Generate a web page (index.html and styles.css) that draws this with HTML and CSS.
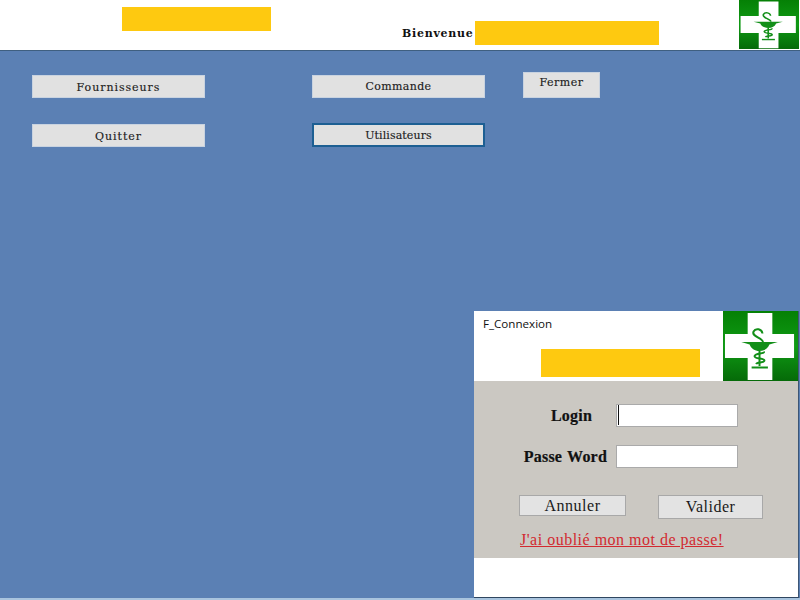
FILE: index.html
```html
<!DOCTYPE html>
<html lang="fr">
<head>
<meta charset="utf-8">
<title>Pharmacie</title>
<link rel="stylesheet" href="styles.css">
</head>
<body>
<svg class="defs" width="0" height="0" aria-hidden="true">
  <defs>
    <linearGradient id="g" x1="0" y1="0" x2="0" y2="1">
      <stop offset="0" stop-color="#058005"/>
      <stop offset="0.5" stop-color="#0f9a14"/>
      <stop offset="1" stop-color="#056a08"/>
    </linearGradient>
    <symbol id="logo" viewBox="0 0 76 70" preserveAspectRatio="none">
      <rect width="76" height="70" fill="url(#g)"/>
      <path d="M25 2H50V23H72V47H50V69H25V47H2V23H25Z" fill="#fff"/>
      <path d="M18.500 31H55.500L47 33.500C45.500 37.500 42 40 37 40C32 40 28.500 37.500 27 33.500Z" fill="#128f18"/>
      <path d="M37 40V55" fill="none" stroke="#128f18" stroke-width="2"/>
      <path d="M29 56.500H45.500" fill="none" stroke="#128f18" stroke-width="2"/>
      <path d="M40 22.500C39.500 18 33 16.500 31 20.500C28.500 25.500 40 27 40.500 31M41.500 40.500C42.500 43 33 42 32 45C31.500 48 42 47 42 49.500C42 52 34.500 51 33.500 53" fill="none" stroke="#128f18" stroke-width="2"/>
    </symbol>
  </defs>
</svg>

<header class="topbar">
  <div class="mask mask-title"></div>
  <div class="welcome">
    <span class="welcome-label">Bienvenue</span>
    <div class="mask mask-user"></div>
  </div>
  <svg class="logo logo-top"><use href="#logo"/></svg>
</header>

<main class="menu">
  <button class="menu-btn" type="button">Fournisseurs</button>
  <button class="menu-btn menu-order" type="button">Commande</button>
  <button class="menu-btn menu-close" type="button">Fermer</button>
  <button class="menu-btn" type="button">Quitter</button>
  <button class="menu-btn is-focus" type="button">Utilisateurs</button>
</main>

<section class="dialog">
  <div class="dialog-head">
    <div class="dialog-brand">
      <div class="dialog-title">F_Connexion</div>
      <div class="mask mask-dialog"></div>
    </div>
    <svg class="logo logo-dialog"><use href="#logo"/></svg>
  </div>
  <form class="dialog-body">
    <div class="field field-login">
      <label class="field-label" for="login">Login</label>
      <span class="input-wrap">
        <input class="field-input" id="login" type="text">
        <span class="caret"></span>
      </span>
    </div>
    <div class="field field-pass">
      <label class="field-label" for="pass">Passe Word</label>
      <input class="field-input" id="pass" type="password">
    </div>
    <div class="actions">
      <button class="dlg-btn dlg-cancel" type="button">Annuler</button>
      <button class="dlg-btn dlg-ok" type="button">Valider</button>
    </div>
    <a class="forgot" href="#">J'ai oublié mon mot de passe!</a>
  </form>
  <div class="dialog-foot"></div>
</section>
<div class="edge"></div>
</body>
</html>
```
FILE: styles.css
```css
* { box-sizing: border-box; }
html, body { height: 100%; }
body {
  margin: 0;
  width: 800px;
  height: 600px;
  overflow: hidden;
  position: relative;
  background: #5b80b4;
  font-family: "Liberation Serif", serif;
}
.defs { position: absolute; }

.mask { background: #fec910; }

.topbar {
  height: 51px;
  background: #fff;
  border-bottom: 1px solid #3f5f80;
  display: flex;
  align-items: flex-start;
  padding-left: 122px;
}
.mask-title { width: 149px; height: 24px; margin-top: 7px; }
.welcome {
  display: flex;
  align-items: center;
  gap: 2px;
  margin: 21px 0 0 131px;
}
.welcome-label {
  font-family: "DejaVu Serif", serif;
  font-weight: 700;
  font-size: 11px;
  letter-spacing: 0.75px;
  color: #111;
  width: 71px;
  white-space: nowrap;
}
.mask-user { width: 184px; height: 24px; }
.logo { display: block; flex: none; }
.logo-top { width: 60px; height: 49px; margin-left: 80px; }

.menu {
  display: grid;
  grid-template-columns: 280px 211px 77px;
  grid-template-rows: 26px 24px;
  row-gap: 25px;
  padding: 21px 0 0 32px;
  justify-items: start;
}
.menu > .menu-btn { align-self: end; }
.menu-btn {
  width: 173px;
  height: 23px;
  margin: 0;
  padding: 1px 0 0;
  background: #e1e1e1;
  border: 1px solid #c9d3e0;
  font-family: "DejaVu Serif", serif;
  font-size: 11px;
  letter-spacing: 0.95px;
  color: #1c1c1c;
  -webkit-text-stroke: 0.15px #1c1c1c;
}
.menu > .menu-order { letter-spacing: 0.35px; padding: 0; }
.menu > .menu-close {
  height: 26px;
  width: 77px;
  padding: 0 0 5px;
  letter-spacing: 0.5px;
}
.menu > .is-focus {
  height: 24px;
  border: 2px solid #1d5f93;
  padding: 0;
  letter-spacing: 0.1px;
}

.dialog {
  position: absolute;
  left: 474px;
  top: 311px;
  width: 325px;
  height: 287px;
  background: #fff;
  border-right: 1px solid #3d5675;
  border-bottom: 1px solid #2f4660;
  display: flex;
  flex-direction: column;
}
.edge {
  position: absolute;
  left: 0;
  right: 0;
  bottom: 0;
  height: 2px;
  background: #a9c4de;
}
.dialog-head {
  height: 70px;
  display: flex;
  justify-content: space-between;
}
.dialog-brand { padding: 6px 0 0 9px; }
.dialog-title {
  font-family: "Open Sans", sans-serif;
  font-size: 11.6px;
  line-height: 14px;
  color: #111;
}
.mask-dialog { width: 159px; height: 28px; margin: 18px 0 0 58px; }
.logo-dialog { width: 75px; height: 70px; }

.dialog-body {
  height: 177px;
  background: #cbc8c2;
  padding-top: 23px;
  display: flex;
  flex-direction: column;
}
.field { display: flex; align-items: center; height: 23px; }
.field-pass { margin-top: 18px; }
.field-label {
  width: 142px;
  font-weight: 700;
  font-size: 16px;
  letter-spacing: 0.2px;
  word-spacing: 1px;
  color: #111;
  text-align: right;
  -webkit-text-stroke: 0.2px #111;
}
.field-login .field-label { padding-right: 24px; }
.field-pass .field-label { padding-right: 9px; }
.input-wrap { position: relative; display: block; }
.field-input {
  display: block;
  width: 122px;
  height: 23px;
  padding: 0;
  background: #fff;
  border: 1px solid #aaa;
  border-radius: 0;
  outline: 0;
}
.caret {
  position: absolute;
  left: 2px;
  top: 1px;
  width: 1px;
  height: 20px;
  background: #111;
}
.actions {
  display: flex;
  align-items: flex-start;
  gap: 32px;
  margin: 27px 0 0 45px;
}
.dlg-btn {
  margin: 0;
  padding: 0;
  background: #e3e3e3;
  border: 1px solid #a8a8a8;
  font-family: "Liberation Serif", serif;
  font-size: 16px;
  letter-spacing: 0.5px;
  color: #1a1a1a;
}
.dlg-cancel { width: 107px; height: 21px; }
.dlg-ok { width: 105px; height: 24px; }
.forgot {
  margin: 11px 0 0 46px;
  font-size: 16px;
  line-height: 20px;
  letter-spacing: 0.5px;
  color: #d22a30;
  text-decoration: underline;
  white-space: nowrap;
}
.dialog-foot { flex: 1; }
```
